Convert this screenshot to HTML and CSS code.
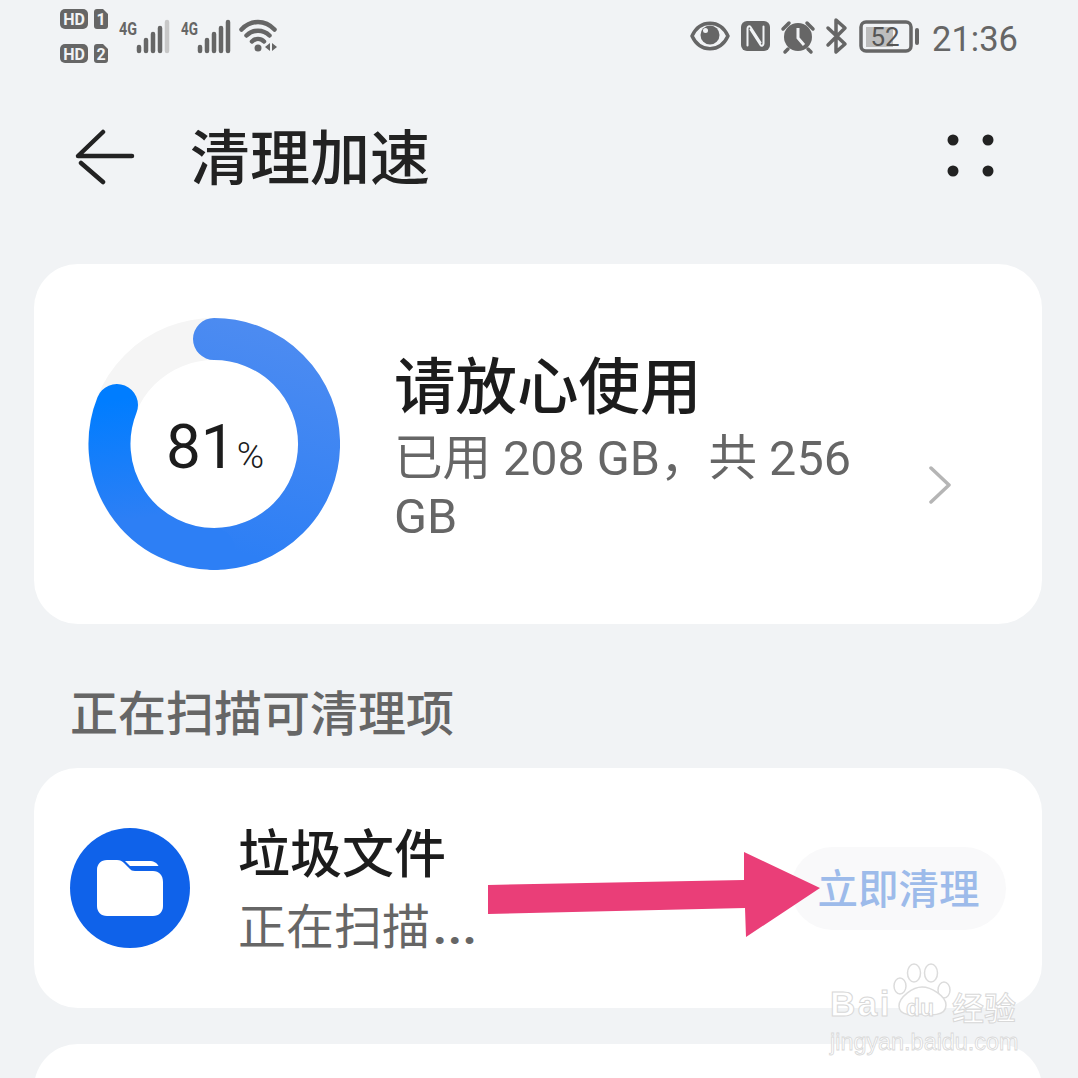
FILE: index.html
```
<!DOCTYPE html>
<html lang="zh-CN">
<head>
<meta charset="utf-8">
<title>清理加速</title>
<link rel="stylesheet" href="styles.css">
</head>
<body>
<div class="page">
  <div class="status">
    <svg class="status-left" width="220" height="80" viewBox="60 0 220 80">
      <rect x="60" y="9" width="28" height="20" rx="5" class="ic"/>
      <text x="74" y="25" class="hd">HD</text>
      <path d="M97 9h6l5 5v12a3 3 0 0 1-3 3h-8a3 3 0 0 1-3-3V12a3 3 0 0 1 3-3z" class="ic"/>
      <text x="101" y="25" class="hd">1</text>
      <rect x="60" y="44" width="28" height="19" rx="5" class="ic"/>
      <text x="74" y="59.500" class="hd">HD</text>
      <path d="M97 44h6l5 5v11a3 3 0 0 1-3 3h-8a3 3 0 0 1-3-3V47a3 3 0 0 1 3-3z" class="ic"/>
      <text x="101" y="59.500" class="hd">2</text>
      <text x="119" y="35" class="sig" textLength="18" lengthAdjust="spacingAndGlyphs">4G</text>
      <g class="bars">
        <path d="M139 47v4M146 40v11M153 34v17M160 28v23"/>
        <path d="M167 22v29" class="bar-off"/>
      </g>
      <text x="181" y="35" class="sig" textLength="17" lengthAdjust="spacingAndGlyphs">4G</text>
      <g class="bars">
        <path d="M200 47v4M207 40v11M214 34v17M221 28v23M228 22v29"/>
      </g>
      <g class="wifi">
        <path d="M241.500 29.500C251 19.500 265 19.500 274.500 29.500"/>
        <path d="M246.500 35.500C253 29 263 29 269.500 35.500"/>
        <path d="M252 41.500C255.500 38 260.500 38 264 41.500"/>
      </g>
      <circle cx="258" cy="48" r="3.500" class="ic"/>
      <path d="M270 43v8l-5-4zM272 43v8l5-4z" class="ic"/>
    </svg>
    <div class="status-right">
      <svg width="230" height="80" viewBox="690 0 230 80">
        <path d="M692 36C700 19 720 19 728 36C720 53 700 53 692 36z" class="line"/>
        <circle cx="710" cy="35" r="9.500" class="ic"/>
        <circle cx="705.500" cy="30.500" r="2.500" class="lite"/>
        <rect x="741" y="21" width="29" height="30" rx="6" class="ic"/>
        <path d="M747.500 45.500V28.500c0-2 2-3 3-1.500l10 15.500M763.500 26.500v17c0 2-2 3-3 1.500l-10-15.500" class="nfc"/>
        <circle cx="798" cy="37" r="14" class="ic"/>
        <path d="M798 28v10l6 7" class="clockhand"/>
        <path d="M783 29l6-6M807 23l6 6M788 49l-3 3M808 49l3 3" class="line"/>
        <path d="M828 28L845 44L836 52V20L845 28L828 45" class="bt"/>
        <rect x="861" y="22" width="50" height="29" rx="5" class="line"/>
        <rect x="866" y="27" width="27" height="20" class="batt"/>
        <rect x="915" y="28" width="4" height="17" rx="2" class="ic"/>
        <text x="885" y="46" class="battnum">52</text>
      </svg>
      <span class="clock">21:36</span>
    </div>
  </div>

  <header class="bar">
    <div class="bar-start">
      <svg class="back" width="60" height="56" viewBox="75 128 60 56">
        <path d="M132 155H78L103 131M81 162L103 181"/>
      </svg>
      <h1 class="title">清理加速</h1>
    </div>
    <svg class="more" width="48" height="48" viewBox="0 0 48 48">
      <circle cx="6" cy="7" r="5.500"/><circle cx="41" cy="7" r="5.500"/>
      <circle cx="6" cy="38" r="5.500"/><circle cx="41" cy="38" r="5.500"/>
    </svg>
  </header>

  <section class="card storage">
    <div class="donut">
      <svg width="252" height="252" viewBox="88 318 252 252">
        <defs>
          <linearGradient id="ringA" gradientUnits="userSpaceOnUse" x1="290" y1="340" x2="230" y2="550">
            <stop offset="0" stop-color="#4c8bf1"/>
            <stop offset="1" stop-color="#2d7ff5"/>
          </linearGradient>
          <linearGradient id="ringB" gradientUnits="userSpaceOnUse" x1="130" y1="520" x2="110" y2="400">
            <stop offset="0" stop-color="#2d7ff5"/>
            <stop offset="1" stop-color="#007dff"/>
          </linearGradient>
        </defs>
        <circle cx="214" cy="444" r="105" class="track"/>
        <path d="M214 339A105 105 0 1 1 214 549" class="arc-a"/>
        <path d="M214 549A105 105 0 0 1 117 405" class="arc-b"/>
      </svg>
      <div class="pct">81<span class="pct-sign">%</span></div>
    </div>
    <div class="storage-text">
      <div class="storage-title">请放心使用</div>
      <div class="storage-sub">已用 208 GB，共 256 GB</div>
    </div>
    <svg class="chev" width="24" height="38" viewBox="0 0 24 38"><path d="M3 2L21 19L3 36"/></svg>
  </section>

  <h2 class="section">正在扫描可清理项</h2>

  <section class="card row">
    <div class="avatar">
      <svg width="66" height="56" viewBox="0 0 66 56">
        <path d="M10 0H20C23 0 25 1 27 3L33 9C34 10 35 11 38 11H56C62 11 66 15 66 22V46C66 52 62 56 56 56H10C4 56 0 52 0 46V10C0 4 4 0 10 0Z" class="folder"/>
        <path d="M28 1H52C57 1 60 3 61.500 6H33Z" class="folder"/>
      </svg>
    </div>
    <div class="row-text">
      <div class="row-title">垃圾文件</div>
      <div class="row-sub">正在扫描<span class="dots">...</span></div>
    </div>
    <div class="pill">立即清理</div>
  </section>

  <section class="card next"></section>
</div>

<svg class="arrow" width="340" height="90" viewBox="485 850 340 90">
  <path d="M488 885L744 880L744 852L820 888L746 937L745 908L488 914Z" class="arrow-fill"/>
</svg>

<div class="mark">
  <svg class="paw" width="60" height="54" viewBox="0 0 60 54">
    <ellipse cx="7" cy="23" rx="6" ry="8"/><ellipse cx="21" cy="10" rx="6.500" ry="9"/>
    <ellipse cx="38" cy="10" rx="6.500" ry="9"/><ellipse cx="51" cy="27" rx="6" ry="8"/>
    <path d="M29 24C20 24 6 34 6 43C6 54 22 52 29 51C36 52 53 54 53 42C53 33 38 24 29 24Z"/>
  </svg>
  <span class="mark-bai">Bai</span>
  <span class="mark-du">du</span>
  <span class="mark-cn">经验</span>
  <span class="mark-url">jingyan.baidu.com</span>
</div>
</body>
</html>
```

FILE: styles.css
```
* { box-sizing: border-box; }
html, body {
  margin: 0;
  height: 1078px;
  overflow: hidden;
  background: #f1f3f5;
}
body {
  position: relative;
  font-family: Roboto, "Noto Sans CJK SC", sans-serif;
  color: #1f1f1f;
}
.page { padding: 0 36px 0 34px; height: 1078px; overflow: hidden; }

/* status bar */
.status {
  height: 80px;
  margin: 0 27px 0 26px;
  display: flex;
  justify-content: space-between;
  align-items: center;
}
.status-left, .status-right svg { display: block; }
.status-right { display: flex; align-items: center; }
.clock {
  width: 95px;
  padding-left: 12px;
  margin-top: -2px;
  font-size: 34.500px;
  color: #666;
  white-space: nowrap;
}
.ic { fill: #666; }
.lite { fill: #f1f3f5; }
.hd {
  fill: #f1f3f5;
  font: 700 16px Roboto, sans-serif;
  text-anchor: middle;
}
.sig { fill: #666; font: 700 19px Roboto, sans-serif; }
.bars { fill: none; stroke: #666; stroke-width: 4.500; stroke-linecap: round; }
.bar-off { stroke: #c8c8c8; }
.wifi { fill: none; stroke: #666; stroke-width: 4.500; stroke-linecap: round; }
.line { fill: none; stroke: #666; stroke-width: 3.500; stroke-linecap: round; stroke-linejoin: round; }
.nfc { fill: none; stroke: #f1f3f5; stroke-width: 2; stroke-linecap: round; stroke-linejoin: round; }
.clockhand { fill: none; stroke: #f1f3f5; stroke-width: 3; }
.bt { fill: none; stroke: #666; stroke-width: 3.500; stroke-linejoin: round; stroke-linecap: round; }
.batt { fill: #bdbdbd; }
.battnum { fill: #555; font: 400 26px Roboto, sans-serif; text-anchor: middle; }

/* header */
.bar {
  height: 156px;
  padding: 0 0 0 41px;
  display: flex;
  align-items: center;
  justify-content: space-between;
}
.bar-start { display: flex; align-items: center; gap: 55px; }
.back { display: block; margin-top: -3px; }
.back path { fill: none; stroke: #222; stroke-width: 4.500; stroke-linecap: round; stroke-linejoin: round; }
.title {
  margin: 0;
  padding-top: 4px;
  font-size: 60px;
  line-height: 80px;
  font-weight: 500;
  color: #222;
}
.more { display: block; margin-right: 47px; margin-top: -2px; fill: #222; }

/* cards */
.card {
  background: #fff;
  border-radius: 44px;
}
.storage {
  margin-top: 28px;
  height: 360px;
  padding: 0 90px 0 54px;
  display: flex;
  align-items: center;
}
.donut { position: relative; width: 252px; height: 252px; flex: none; }
.donut svg { display: block; }
.track { fill: none; stroke: #f5f5f5; stroke-width: 42; }
.arc-a { fill: none; stroke: url(#ringA); stroke-width: 42; stroke-linecap: round; }
.arc-b { fill: none; stroke: url(#ringB); stroke-width: 42; stroke-linecap: round; }
.pct {
  position: absolute;
  inset: 0;
  display: flex;
  align-items: center;
  justify-content: center;
  gap: 1px;
  font-size: 62px;
  color: #1c1c1c;
  padding: 4px 0 0 2px;
}
.pct-sign { font-size: 37px; margin-top: 18px; font-weight: 300; }
.storage-text { margin-left: 54px; width: 490px; padding-top: 8px; }
.storage-title {
  font-size: 61.500px;
  line-height: 76px;
  margin-bottom: 4px;
  font-weight: 500;
  color: #1c1c1c;
}
.storage-sub {
  font-size: 48.500px;
  line-height: 58px;
  color: #666;
}
.chev { margin-left: auto; margin-right: 0; margin-top: 82px; display: block; }
.chev path { fill: none; stroke: #b5b5b5; stroke-width: 3.500; stroke-linecap: round; stroke-linejoin: round; }

.section {
  margin: 0;
  height: 144px;
  padding: 67px 0 0 36px;
  font-size: 48px;
  line-height: 48px;
  font-weight: 500;
  color: #666;
}

.row {
  height: 240px;
  padding: 0 36px;
  display: flex;
  align-items: center;
}
.avatar {
  width: 120px;
  height: 120px;
  flex: none;
  border-radius: 50%;
  background: #0f62ea;
  display: flex;
  align-items: center;
  justify-content: center;
}
.avatar svg { display: block; }
.folder { fill: #fff; }
.row-text { margin-left: 48px; padding-top: 8px; }
.row-title {
  font-size: 52px;
  line-height: 72px;
  font-weight: 500;
  color: #1c1c1c;
}
.row-sub {
  font-size: 48px;
  line-height: 72px;
  color: #666;
  white-space: nowrap;
}
.dots { letter-spacing: 1px; margin-left: 3px; font-weight: 700; }
.pill {
  margin-left: auto;
  width: 215px;
  height: 83px;
  padding-top: 3px;
  border-radius: 42px;
  background: #f9f9fa;
  color: #9dbbea;
  font-size: 40.500px;
  font-weight: 500;
  line-height: 80px;
  text-align: center;
}
.next { margin-top: 36px; height: 120px; }

/* overlays */
.arrow { position: absolute; left: 485px; top: 850px; display: block; }
.arrow-fill { fill: #ea3e78; }
.mark {
  position: absolute;
  left: 826px;
  top: 960px;
  width: 196px;
  height: 96px;
}
.paw {
  position: absolute;
  left: 67px;
  top: 3px;
  fill: #fff;
  stroke: #dcdcdc;
  stroke-width: 1.500;
}
.mark-bai, .mark-du, .mark-cn, .mark-url {
  position: absolute;
  color: #fff;
  white-space: nowrap;
  -webkit-text-stroke: 1px #d8d8d8;
}
.mark-bai {
  left: 4px;
  top: 24px;
  font: 700 35px/40px "Liberation Sans", sans-serif;
  letter-spacing: 2.500px;
}
.mark-du {
  left: 80px;
  top: 35px;
  font: 700 23px/26px "Liberation Sans", sans-serif;
}
.mark-cn {
  left: 126px;
  top: 24px;
  font: 500 32px/44px "Noto Sans CJK SC", sans-serif;
}
.mark-url {
  left: 4px;
  top: 68px;
  font: 400 23.400px/28px "Liberation Sans", sans-serif;
  -webkit-text-stroke: 0.800px #d8d8d8;
}
```
